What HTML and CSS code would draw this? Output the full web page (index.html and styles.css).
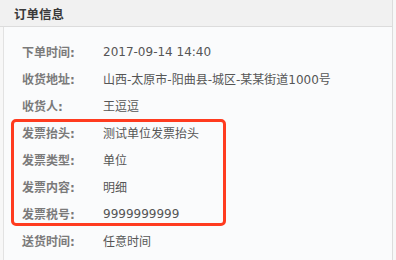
FILE: index.html
```html
<!DOCTYPE html>
<html lang="zh">
<head>
<meta charset="utf-8">
<link rel="stylesheet" href="styles.css">
</head>
<body>
<div class="panel">
  <div class="panel-head">订单信息</div>
  <div class="panel-body">
    <div class="row"><span class="label">下单时间:</span><span class="value">2017-09-14 14:40</span></div>
    <div class="row"><span class="label">收货地址:</span><span class="value">山西-太原市-阳曲县-城区-某某街道1000号</span></div>
    <div class="row"><span class="label">收货人:</span><span class="value">王逗逗</span></div>
    <div class="row"><span class="label">发票抬头:</span><span class="value">测试单位发票抬头</span></div>
    <div class="row"><span class="label">发票类型:</span><span class="value">单位</span></div>
    <div class="row"><span class="label">发票内容:</span><span class="value">明细</span></div>
    <div class="row"><span class="label">发票税号:</span><span class="value">9999999999</span></div>
    <div class="row"><span class="label">送货时间:</span><span class="value">任意时间</span></div>
    <div class="highlight"></div>
  </div>
</div>
</body>
</html>
```
FILE: styles.css
```css
html, body {
  margin: 0;
  padding: 0;
  background: #f7f7f7;
}
body {
  width: 396px;
  height: 260px;
  overflow: hidden;
  font-family: "DejaVu Sans", "Noto Sans CJK SC", sans-serif;
  font-size: 12px;
}
.panel {
  width: 393px;
}
.panel-head {
  height: 27px;
  box-sizing: border-box;
  background: #f1f1f1;
  border-bottom: 1px solid #dcdcdc;
  border-right: 1px solid #dcdcdc;
  padding-left: 14px;
  display: flex;
  align-items: center;
  font-family: "Noto Sans CJK SC", sans-serif;
  font-weight: bold;
  font-size: 12.5px;
  color: #3a3a3a;
}
.panel-body {
  position: relative;
  margin-left: 3px;
  background: #fafbfc;
  border-left: 1px solid #e2e2e2;
  border-right: 1px solid #dcdcdc;
  padding: 11px 0 0 18px;
  height: 233px;
  box-sizing: border-box;
}
.row {
  display: flex;
  align-items: center;
  height: 27px;
}
.label {
  width: 81px;
  flex: none;
  color: #7a7a7a;
  font-weight: bold;
}
.value {
  color: #555;
}
.highlight {
  position: absolute;
  left: 7px;
  top: 92px;
  width: 215px;
  height: 107px;
  box-sizing: border-box;
  border: 3px solid #ff3b1f;
  border-radius: 5px;
}
```
